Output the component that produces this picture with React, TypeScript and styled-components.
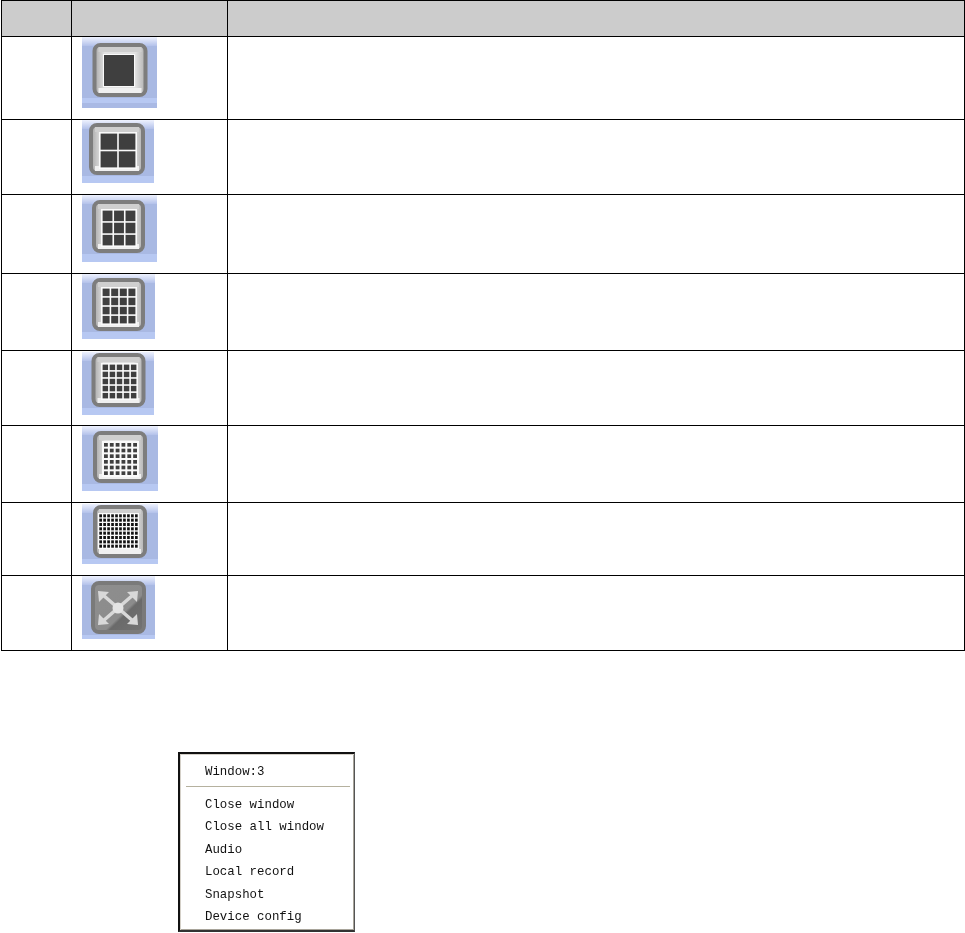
import React, { FunctionComponent } from 'react';
import styled, { createGlobalStyle } from 'styled-components';

type Rect = [number, number, number, number];

type TLayoutRow = {
  rowHeight: number;
  top?: number;
  width: number;
  height: number;
  button: Rect; // x, y, w, h inside the picture
  grid?: Rect;
  cols?: number;
  rows?: number;
  gap?: number;
};

const ROWS: Array<TLayoutRow> = [
  { rowHeight: 83, width: 75, height: 71, button: [10.5, 6, 55, 54], grid: [21, 17, 32, 33], cols: 1, rows: 1, gap: 1 },
  { rowHeight: 75, width: 72, height: 63, button: [7, 3, 56, 52], grid: [17, 12, 38, 37], cols: 2, rows: 2, gap: 1.6 },
  { rowHeight: 79, width: 75, height: 67, button: [10, 5, 53, 53], grid: [19, 14, 36, 38], cols: 3, rows: 3, gap: 1.6 },
  { rowHeight: 77, width: 73, height: 65, button: [10, 4, 53, 53], grid: [19, 13, 36, 38], cols: 4, rows: 4, gap: 1.6 },
  { rowHeight: 75, top: 1, width: 72, height: 63, button: [9.5, 1, 54, 54], grid: [19, 11, 37, 37], cols: 5, rows: 5, gap: 1.6 },
  { rowHeight: 77, width: 76, height: 65, button: [11, 5, 54, 52], grid: [20, 15, 37, 36], cols: 6, rows: 6, gap: 2 },
  { rowHeight: 73, top: 1, width: 76, height: 60, button: [11, 1, 54, 53], grid: [16, 9, 41, 36], cols: 10, rows: 8, gap: 1.3 },
  { rowHeight: 75, width: 73, height: 63, button: [9, 5, 55, 53] },
];

const MENU_ITEMS = ['Close window', 'Close all window', 'Audio', 'Local record', 'Snapshot', 'Device config'];

const CellGrid: FunctionComponent<{ grid: Rect; cols: number; rows: number; gap: number }> = ({ grid, cols, rows, gap }) => {
  const [x, y, w, h] = grid;
  const cw = (w - gap * (cols + 1)) / cols;
  const ch = (h - gap * (rows + 1)) / rows;
  const cells = [];
  for (let r = 0; r < rows; r++) {
    for (let c = 0; c < cols; c++) {
      cells.push(
        <rect
          key={`${r}-${c}`}
          x={x + gap + c * (cw + gap)}
          y={y + gap + r * (ch + gap)}
          width={cw}
          height={ch}
          fill={cols > 6 ? '#111' : '#3f3f3f'}
        />
      );
    }
  }
  return (
    <>
      <rect x={x} y={y} width={w} height={h} fill="#fafafa" />
      {cells}
    </>
  );
};

const ExpandArrows: FunctionComponent = () => {
  const c = '#d8d8d8';
  return (
    <g>
      <path d="M21 19 L51 45 M51 19 L21 45" stroke={c} strokeWidth={3.5} fill="none" />
      <polygon points="16,15 27,16 17,26" fill={c} />
      <polygon points="56,15 45,16 55,26" fill={c} />
      <polygon points="16,49 27,48 17,38" fill={c} />
      <polygon points="56,49 45,48 55,38" fill={c} />
      <circle cx={36} cy={32} r={5.5} fill="#e4e4e4" />
    </g>
  );
};

const LayoutIcon: FunctionComponent<{ row: TLayoutRow; id: number }> = ({ row, id }) => {
  const { width, height, button, grid, cols, rows, gap } = row;
  const [bx, by, bw, bh] = button;
  const expand = !grid;
  const bandTop = by + bh + 1;

  return (
    <IconSvg width={width} height={height} viewBox={`0 0 ${width} ${height}`} top={row.top || 0}>
      <defs>
        <linearGradient id={`sky${id}`} x1="0" y1="0" x2="0" y2="1">
          <stop offset="0" stopColor="#eef2fe" />
          <stop offset="1" stopColor="#b3c1ea" />
        </linearGradient>
        <linearGradient id={`face${id}`} x1="0" y1="0" x2="1" y2="0">
          <stop offset="0" stopColor="#a8a8a8" />
          <stop offset="0.2" stopColor="#e2e2e2" />
          <stop offset="0.8" stopColor="#e2e2e2" />
          <stop offset="1" stopColor="#b0b0b0" />
        </linearGradient>
        <linearGradient id={`dark${id}`} x1="0" y1="0" x2="1" y2="1">
          <stop offset="0" stopColor="#8e8e8e" />
          <stop offset="0.6" stopColor="#8c8c8c" />
          <stop offset="0.64" stopColor="#6a6a6a" />
          <stop offset="1" stopColor="#747474" />
        </linearGradient>
      </defs>
      <rect width={width} height={height} fill="#a9b9e3" />
      <rect width={width} height={9} fill={`url(#sky${id})`} />
      <rect y={bandTop} width={width} height={height - bandTop} fill="#b7c8f2" />
      {height > 70 && <rect y={height - 5} width={width} height={5} fill="#a9b9e4" />}
      <rect
        x={bx + 2}
        y={by + 2}
        width={bw - 4}
        height={bh - 4}
        rx={6}
        fill={expand ? `url(#dark${id})` : `url(#face${id})`}
        stroke={expand ? '#7a7a7a' : '#7d7d7d'}
        strokeWidth={4}
      />
      {!expand && <rect x={bx + 6} y={by + 4} width={bw - 12} height={5} fill="#cfcfcf" />}
      {!expand && <rect x={bx + 6} y={by + bh - 9} width={bw - 12} height={5} fill="#f0f0f0" />}
      {grid && <CellGrid grid={grid} cols={cols || 1} rows={rows || 1} gap={gap || 1.5} />}
      {expand && <ExpandArrows />}
    </IconSvg>
  );
};

const App: FunctionComponent = () => {
  return (
    <Page>
      <GlobalStyle />
      <Table>
        <HeaderRow>
          <NumCell />
          <IconCell />
          <DescCell />
        </HeaderRow>
        {ROWS.map((row, idx) => (
          <Row key={idx} height={row.rowHeight}>
            <NumCell />
            <IconCell>
              <LayoutIcon row={row} id={idx} />
            </IconCell>
            <DescCell />
          </Row>
        ))}
      </Table>
      <Menu>
        <MenuItem>Window:3</MenuItem>
        <Separator />
        {MENU_ITEMS.map((item) => (
          <MenuItem key={item}>{item}</MenuItem>
        ))}
      </Menu>
    </Page>
  );
};

const GlobalStyle = createGlobalStyle`
  html, body {
    margin: 0;
    padding: 0;
    background: #fff;
  }
`;

const Page = styled.div`
  width: 965px;
  height: 933px;
  overflow: hidden;
  padding-left: 1px;
  box-sizing: border-box;
`;

const Table = styled.div`
  width: 964px;
  box-sizing: border-box;
  border-top: 1px solid #000;
  border-left: 1px solid #000;
  border-right: 1px solid #000;
`;

const Row = styled.div<{ height: number }>`
  display: grid;
  grid-template-columns: 70px 156px 1fr;
  box-sizing: border-box;
  height: ${({ height }) => height}px;
  border-bottom: 1px solid #000;
`;

const HeaderRow = styled(Row).attrs({ height: 36 })`
  background: #cccccc;
`;

const NumCell = styled.div`
  border-right: 1px solid #000;
`;

const IconCell = styled.div`
  border-right: 1px solid #000;
  padding-left: 10px;
`;

const DescCell = styled.div``;

const IconSvg = styled.svg<{ top: number }>`
  display: block;
  margin-top: ${({ top }) => top}px;
  filter: blur(0.5px);
`;

const Menu = styled.div`
  box-sizing: border-box;
  width: 177px;
  height: 180px;
  margin: 101px 0 0 177px;
  padding: 7px 0 0 25px;
  background: #fff;
  border-top: 2px solid #111;
  border-left: 2px solid #111;
  border-right: 1px solid #555;
  border-bottom: 2px solid #333;
  box-shadow: inset 1px 1px 0 #d4d0c8, inset -1px -1px 0 #a8a49a;
`;

const MenuItem = styled.div`
  font-family: 'Liberation Mono', 'DejaVu Sans Mono', monospace;
  font-size: 12.4px;
  line-height: 22.5px;
  height: 22.5px;
  color: #111;
  white-space: nowrap;
  filter: blur(0.25px);
`;

const Separator = styled.div`
  height: 1px;
  margin: 2px 4px 7px -19px;
  background: #b5b19f;
`;

export default App;
